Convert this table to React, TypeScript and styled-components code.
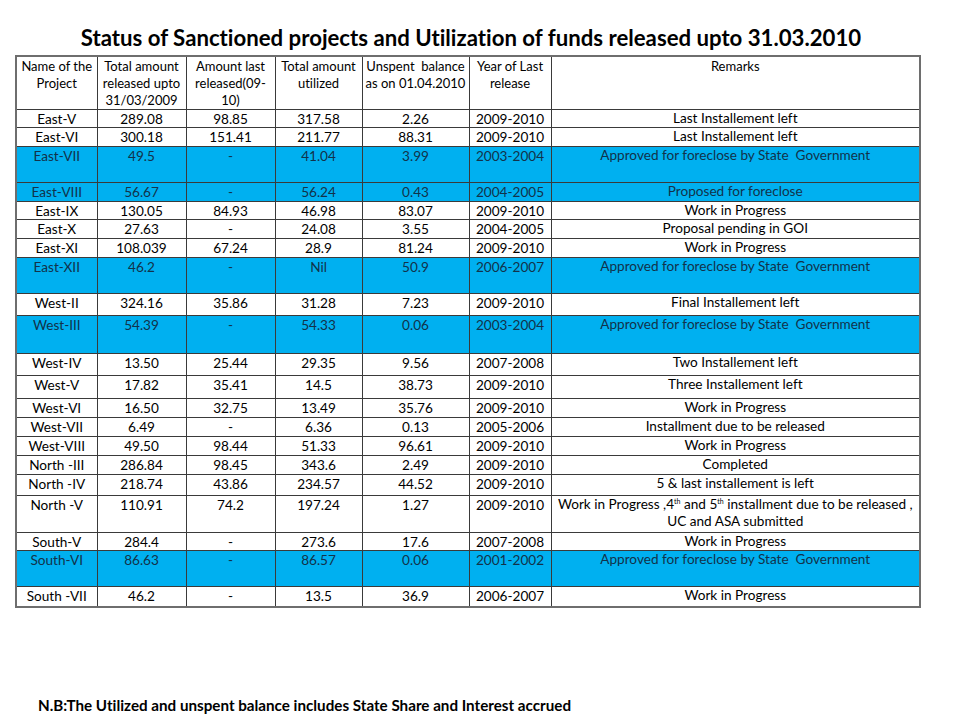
import React from "react";
import styled, { createGlobalStyle } from "styled-components";

const Global = createGlobalStyle`
  html, body { margin: 0; padding: 0; background: #fff; }
  body { font-family: Lato, "Open Sans", sans-serif; color: #000; font-variant-ligatures: none; }
`;

const Page = styled.div`
  width: 960px;
  height: 720px;
  display: flex;
  flex-direction: column;
  box-sizing: border-box;
  padding-top: 23px;
  background: #fff;
`;

const Title = styled.h1`
  margin: 0;
  height: 32px;
  font-family: Lato, "Open Sans", sans-serif;
  font-weight: 700;
  font-size: 22.2px;
  line-height: 30px;
  text-align: center;
  padding-right: 18px;
  color: #000;
`;

const Table = styled.table`
  margin-left: 15px;
  width: 906px;
  border-collapse: collapse;
  table-layout: fixed;
  border: 2px solid #6e6e6e;
  font-family: Lato, "Open Sans", sans-serif;
  font-size: 13.6px;
`;

const Row = styled.tr<{ $h: number; $blue?: boolean }>`
  height: ${(p) => p.$h}px;
  background: ${(p) => (p.$blue ? "#00b0f0" : "#fff")};
  color: ${(p) => (p.$blue ? "#12324a" : "#000")};
`;

const Head = styled.th`
  border: 1px solid #3a3a3a;
  font-weight: 400;
  font-size: 13px;
  line-height: 17px;
  vertical-align: top;
  padding: 1px 1px 0;
  text-align: center;
`;

const Cell = styled.td`
  border: 1px solid #3a3a3a;
  line-height: 16px;
  vertical-align: top;
  padding: 1px 2px 0;
  text-align: center;
  white-space: nowrap;
  overflow: visible;
`;

const RemarkCell = styled(Cell)`
  white-space: normal;
  line-height: 17px;
  padding-top: 0;
`;

const Sup = styled.sup`
  font-size: 7px;
  vertical-align: top;
  position: relative;
  top: -3px;
`;

const Note = styled.div`
  margin-top: auto;
  margin-bottom: 6px;
  padding-left: 38px;
  font-family: Lato, "Open Sans", sans-serif;
  font-weight: 700;
  font-size: 15.2px;
  line-height: 18px;
`;

type R = {
  name: string;
  a: string;
  b: string;
  c: string;
  d: string;
  y: string;
  r: React.ReactNode;
  h: number;
  blue?: boolean;
};

const APPROVED = "Approved for foreclose by State\u00a0 Government";

const rows: R[] = [
  { name: "East-V", a: "289.08", b: "98.85", c: "317.58", d: "2.26", y: "2009-2010", r: "Last Installement left", h: 18 },
  { name: "East-VI", a: "300.18", b: "151.41", c: "211.77", d: "88.31", y: "2009-2010", r: "Last Installement left", h: 19 },
  { name: "East-VII", a: "49.5", b: "-", c: "41.04", d: "3.99", y: "2003-2004", r: APPROVED, h: 36, blue: true },
  { name: "East-VIII", a: "56.67", b: "-", c: "56.24", d: "0.43", y: "2004-2005", r: "Proposed for foreclose", h: 19, blue: true },
  { name: "East-IX", a: "130.05", b: "84.93", c: "46.98", d: "83.07", y: "2009-2010", r: "Work in Progress", h: 18 },
  { name: "East-X", a: "27.63", b: "-", c: "24.08", d: "3.55", y: "2004-2005", r: "Proposal pending in GOI", h: 19 },
  { name: "East-XI", a: "108.039", b: "67.24", c: "28.9", d: "81.24", y: "2009-2010", r: "Work in Progress", h: 19 },
  { name: "East-XII", a: "46.2", b: "-", c: "Nil", d: "50.9", y: "2006-2007", r: APPROVED, h: 36, blue: true },
  { name: "West-II", a: "324.16", b: "35.86", c: "31.28", d: "7.23", y: "2009-2010", r: "Final Installement left", h: 22 },
  { name: "West-III", a: "54.39", b: "-", c: "54.33", d: "0.06", y: "2003-2004", r: APPROVED, h: 38, blue: true },
  { name: "West-IV", a: "13.50", b: "25.44", c: "29.35", d: "9.56", y: "2007-2008", r: "Two Installement left", h: 22 },
  { name: "West-V", a: "17.82", b: "35.41", c: "14.5", d: "38.73", y: "2009-2010", r: "Three Installement left", h: 23 },
  { name: "West-VI", a: "16.50", b: "32.75", c: "13.49", d: "35.76", y: "2009-2010", r: "Work in Progress", h: 19 },
  { name: "West-VII", a: "6.49", b: "-", c: "6.36", d: "0.13", y: "2005-2006", r: "Installment due to be released", h: 19 },
  { name: "West-VIII", a: "49.50", b: "98.44", c: "51.33", d: "96.61", y: "2009-2010", r: "Work in Progress", h: 19 },
  { name: "North -III", a: "286.84", b: "98.45", c: "343.6", d: "2.49", y: "2009-2010", r: "Completed", h: 19 },
  { name: "North -IV", a: "218.74", b: "43.86", c: "234.57", d: "44.52", y: "2009-2010", r: "5 & last installement is left", h: 21 },
  {
    name: "North -V",
    a: "110.91",
    b: "74.2",
    c: "197.24",
    d: "1.27",
    y: "2009-2010",
    r: (
      <>
        Work in Progress ,4<Sup>th</Sup> and 5<Sup>th</Sup> installment due to be released ,
        <br />
        UC and ASA submitted
      </>
    ),
    h: 37,
  },
  { name: "South-V", a: "284.4", b: "-", c: "273.6", d: "17.6", y: "2007-2008", r: "Work in Progress", h: 18 },
  { name: "South-VI", a: "86.63", b: "-", c: "86.57", d: "0.06", y: "2001-2002", r: APPROVED, h: 36, blue: true },
  { name: "South -VII", a: "46.2", b: "-", c: "13.5", d: "36.9", y: "2006-2007", r: "Work in Progress", h: 20 },
];

const widths = [81, 89, 89, 87, 107, 82, 369];

export default function App() {
  return (
    <Page>
      <Global />
      <Title>Status of Sanctioned projects and Utilization of funds released upto 31.03.2010</Title>
      <Table>
        <colgroup>
          {widths.map((w, i) => (
            <col key={i} style={{ width: w }} />
          ))}
        </colgroup>
        <thead>
          <Row $h={53}>
            <Head>Name of the Project</Head>
            <Head>Total amount released upto 31/03/2009</Head>
            <Head>
              Amount last released(09-<wbr />10)
            </Head>
            <Head>Total amount utilized</Head>
            <Head>
              Unspent&nbsp; balance <br />
              as on 01.04.2010
            </Head>
            <Head>Year of Last release</Head>
            <Head>Remarks</Head>
          </Row>
        </thead>
        <tbody>
          {rows.map((r) => (
            <Row key={r.name} $h={r.h} $blue={r.blue}>
              <Cell>{r.name}</Cell>
              <Cell>{r.a}</Cell>
              <Cell>{r.b}</Cell>
              <Cell>{r.c}</Cell>
              <Cell>{r.d}</Cell>
              <Cell>{r.y}</Cell>
              <RemarkCell>{r.r}</RemarkCell>
            </Row>
          ))}
        </tbody>
      </Table>
      <Note>N.B:The Utilized and unspent balance includes State Share and Interest accrued</Note>
    </Page>
  );
}
